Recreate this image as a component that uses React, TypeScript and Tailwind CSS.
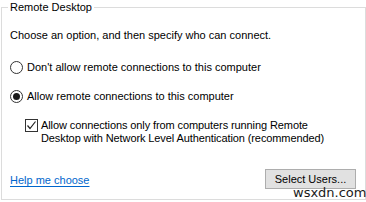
export default function App() {
  return (
    <div
      className="relative w-[366px] h-[202px] bg-white text-black text-[11px] leading-[15px]"
      style={{ fontFamily: '"Liberation Sans", Arial, sans-serif' }}
    >
      <fieldset className="ml-[1px] w-[365px] h-[200px] border border-[#dcdcdc]">
        <legend className="ml-[6px] px-[2px] leading-[14px]">Remote Desktop</legend>

        <div className="pl-[8px] pr-[9px] pt-[14px]">
          <p>Choose an option, and then specify who can connect.</p>

          <label className="mt-[17px] flex items-center gap-[4px]">
            <span className="w-[13px] h-[13px] shrink-0 rounded-full border border-[#333333] bg-white" />
            <span>Don't allow remote connections to this computer</span>
          </label>

          <label className="mt-[14px] flex items-center gap-[4px]">
            <span className="w-[13px] h-[13px] shrink-0 rounded-full border border-[#333333] bg-white flex items-center justify-center">
              <span className="w-[7px] h-[7px] rounded-full bg-[#1a1a1a]" />
            </span>
            <span>Allow remote connections to this computer</span>
          </label>

          <label className="mt-[15px] ml-[15px] flex items-start gap-[3px] leading-[13px]">
            <span className="w-[13px] h-[13px] shrink-0 border border-[#333333] bg-white flex items-center justify-center">
              <svg width="11" height="11" viewBox="0 0 11 11">
                <path d="M1.5 5.5 L4 8.5 L9.5 1.5" fill="none" stroke="#222" strokeWidth="1.2" />
              </svg>
            </span>
            <span className="tracking-[-0.1px]">
              Allow connections only from computers running Remote
              <br />
              Desktop with Network Level Authentication (recommended)
            </span>
          </label>

          <div className="mt-[24px] flex items-center justify-between">
            <a className="mt-[3px] text-[#0066cc] underline underline-offset-[2px]" href="#">
              Help me choose
            </a>
            <button className="w-[91px] h-[20px] bg-[#e1e1e1] border border-[#adadad] leading-[18px] text-center">
              Select Users...
            </button>
          </div>
        </div>
      </fieldset>

      <span
        className="absolute left-[293px] top-[185px] text-[13px] leading-[15px] text-[#1a1a1a]"
        style={{ fontFamily: '"DejaVu Sans", sans-serif' }}
      >
        wsxdn.com
      </span>
    </div>
  );
}
